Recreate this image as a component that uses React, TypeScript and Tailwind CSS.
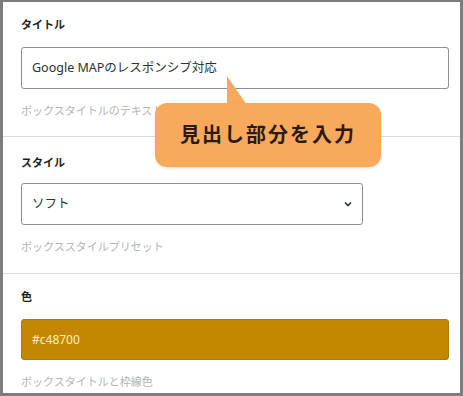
import React from "react";

const font = { fontFamily: '"Noto Sans", "Noto Sans CJK JP", sans-serif' };

const Label = ({ children }: { children: React.ReactNode }) => (
  <div className="h-4 text-[11px] leading-4 font-bold text-[#1e1e1e]">{children}</div>
);

const Help = ({ children }: { children: React.ReactNode }) => (
  <div className="mt-[14px] h-4 text-[11px] leading-4 text-[#b4b4b4]">{children}</div>
);

export default function App() {
  return (
    <div
      style={font}
      className="relative w-[463px] h-[396px] overflow-hidden bg-white border-l-[3px] border-r-[3px] border-t-2 border-b-[3px] border-[#7d7d7d]"
    >
      <div className="pl-[18px] pr-[11px] pt-[15px] pb-[17px] border-b border-[#dcdcdc]">
        <Label>タイトル</Label>
        <div className="mt-[14px] h-[42px] flex items-center px-[10px] border border-[#8c8f94] rounded-[3px] text-[12.5px] text-[#2c3338]">
          Google MAPのレスポンシブ対応
        </div>
        <Help>ボックスタイトルのテキスト</Help>
      </div>

      <div className="pl-[18px] pr-[11px] pt-[18px] pb-[18px] border-b border-[#dcdcdc]">
        <Label>スタイル</Label>
        <div className="mt-3 w-[342px] h-[42px] flex items-center justify-between pl-[10px] pr-[8px] border border-[#8c8f94] rounded-[3px] text-[12.5px] text-[#2c3338]">
          <span>ソフト</span>
          <svg width="12" height="12" viewBox="0 0 12 12" fill="none">
            <path d="M3 4.5 L6 7.5 L9 4.5" stroke="#2c3338" strokeWidth="1.6" />
          </svg>
        </div>
        <Help>ボックススタイルプリセット</Help>
      </div>

      <div className="pl-[18px] pr-[11px] pt-[15px]">
        <Label>色</Label>
        <div className="mt-[14px] h-[41px] flex items-center px-[10px] bg-[#c48700] border border-[#a87a10] rounded-[3px] text-[12px] text-[#fcefc0]">
          #c48700
        </div>
        <Help>ボックスタイトルと枠線色</Help>
      </div>

      <svg className="absolute left-[221px] top-[72px]" width="28" height="34" viewBox="0 0 28 34">
        <path d="M3 2 L3 34 L25 34 Z" fill="#f9a95b" />
      </svg>
      <div className="absolute left-[152px] top-[101px] w-[226px] h-[64px] rounded-xl bg-[#f9a95b] shadow-[0_1px_3px_rgba(0,0,0,0.12)] flex items-center justify-center text-[20px] font-bold tracking-[2px] text-[#2a1a12]">
        見出し部分を入力
      </div>
    </div>
  );
}
